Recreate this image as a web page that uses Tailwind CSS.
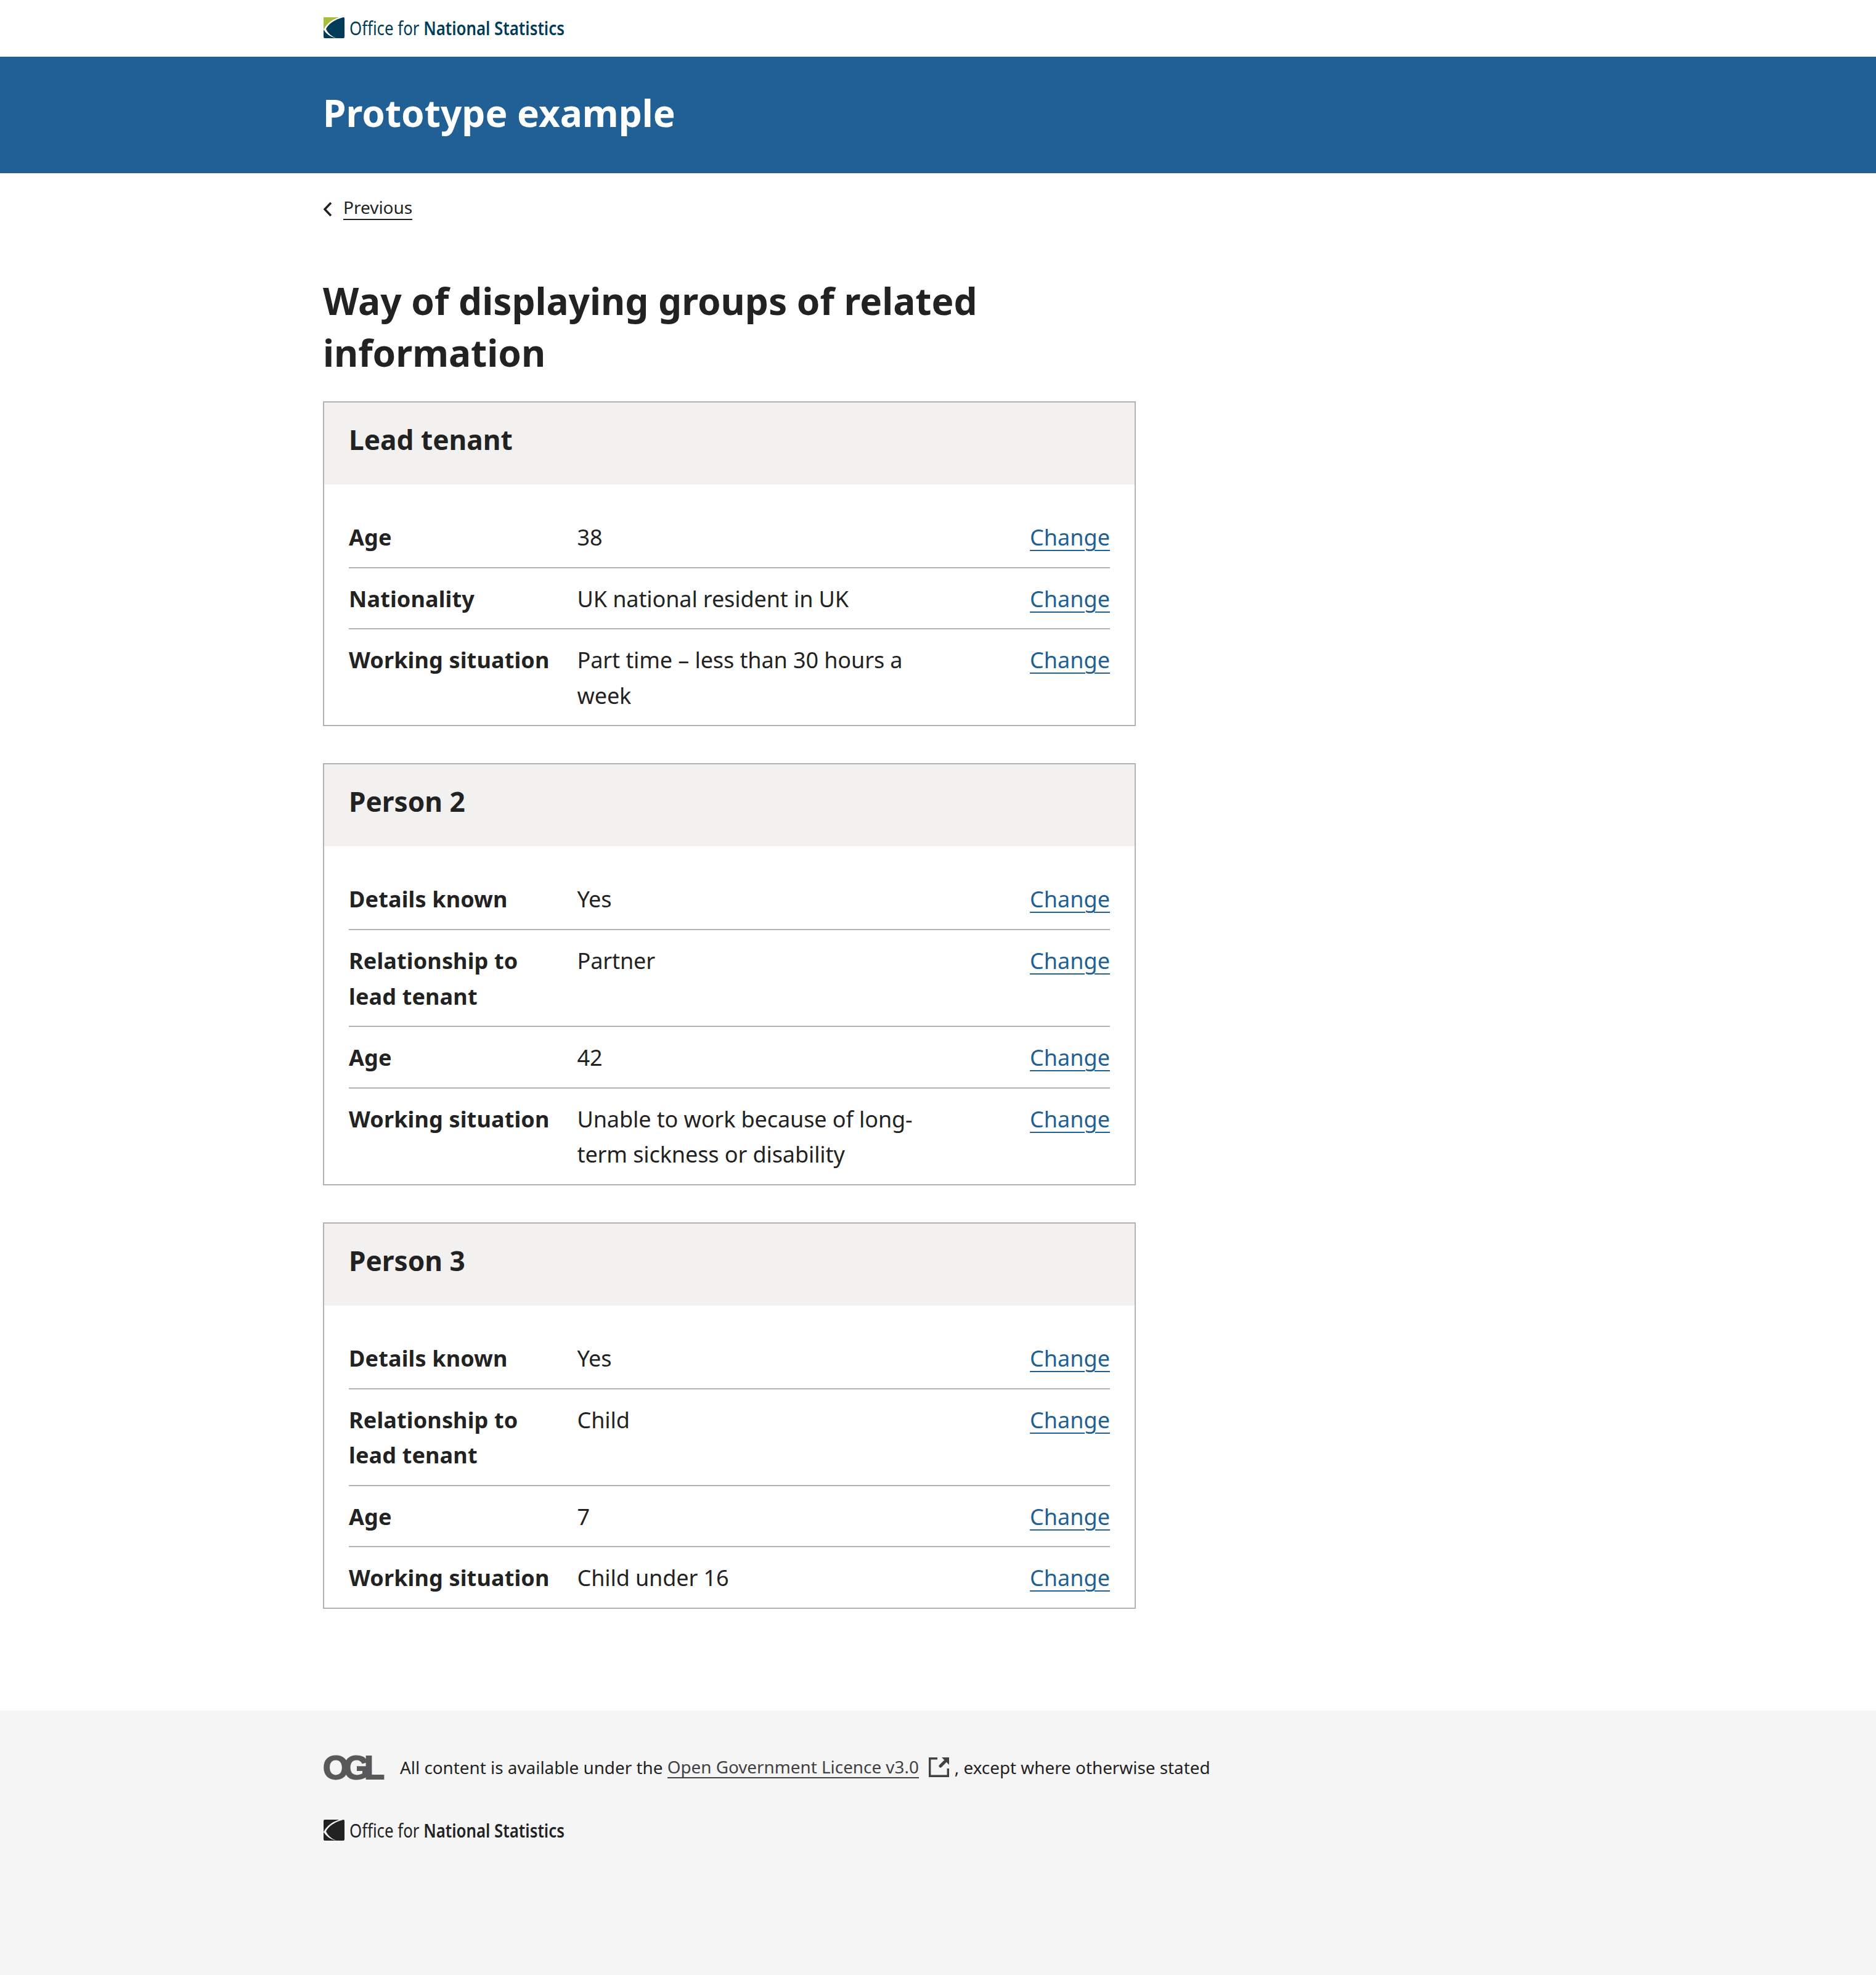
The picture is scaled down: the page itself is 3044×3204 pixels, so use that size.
<!DOCTYPE html>
<html lang="en">
<head>
    <meta charset="UTF-8">
    <meta name="viewport" content="width=device-width, initial-scale=1.0">
    <title>Prototype example</title>
    <script src="https://cdn.jsdelivr.net/npm/@tailwindcss/browser@4"></script>
</head>
<body class="bg-white font-['Noto_Sans',sans-serif] text-[#222222] text-[36px] leading-[57.6px]">
    <!-- Masthead -->
    <header class="h-[92px] flex items-center pl-[524px]">
        <svg class="w-[36px] h-[36px] shrink-0 -mt-[2px]" viewBox="0 0 36 36">
            <rect x="1" y="1" width="34" height="34" rx="2" fill="#003c57"/>
            <path d="M1 1H30C16 4 6 12 1 21Z" fill="#a8bd3a"/>
            <path d="M31 0C16 3 6 11 1 21C5 27 11 33 22 35C14 32 8 27 5 20C9 12 18 5 33 1Z" fill="#fff"/>
        </svg>
        <span class="ml-[7px] -mt-[2px] text-[31px] leading-[40px] text-[#003c57] inline-block origin-left scale-x-[0.833] whitespace-nowrap">Office for <span class="font-semibold">National Statistics</span></span>
    </header>

    <!-- Title banner -->
    <div class="bg-[#206095] h-[189px] flex items-center pl-[524px]">
        <div class="text-white font-bold text-[60.3px] leading-[84px] -mt-[8px]">Prototype example</div>
    </div>

    <main class="pl-[524px] w-[1843px] box-content">
        <a class="flex items-center pt-[36px] text-[28px] leading-[44px]">
            <svg class="w-[16px] h-[24px] mr-[17px] mt-[3px]" viewBox="0 0 16 24" fill="none" stroke="#222222" stroke-width="3.500"><path d="M13 2L3 12.500L13 23"/></svg>
            <span class="border-b-2 border-[#222222] leading-[38px]">Previous</span>
        </a>

        <h1 class="font-bold text-[60.3px] leading-[84px] mt-[89px] w-[1200px]">Way of displaying groups of related information</h1>

        <!-- Lead tenant -->
        <section class="mt-[37px] border-2 border-[#b1b4b6] w-[1319px]">
            <h2 class="bg-[#f2f1f0] h-[133px] pl-[40px] pt-[31px] font-bold text-[44.2px] leading-[58px]">Lead tenant</h2>
            <div class="pt-[36px] px-[40px]">
                <div class="flex pt-[21px] pb-[19px] border-b-2 border-[#b1b4b6]">
                    <div class="w-[370.500px] pr-[31px] font-bold tracking-[0.15px]">Age</div>
                    <div class="w-[600px]">38</div>
                    <a class="ml-auto h-fit text-[#206095] underline underline-offset-[7px] decoration-2">Change</a>
                </div>
                <div class="flex pt-[21px] pb-[19px] border-b-2 border-[#b1b4b6]">
                    <div class="w-[370.500px] pr-[31px] font-bold tracking-[0.15px]">Nationality</div>
                    <div class="w-[600px] tracking-[-0.1px]">UK national resident in UK</div>
                    <a class="ml-auto h-fit text-[#206095] underline underline-offset-[7px] decoration-2">Change</a>
                </div>
                <div class="flex pt-[21px] pb-[19px]">
                    <div class="w-[370.500px] pr-[31px] font-bold tracking-[0.15px]">Working situation</div>
                    <div class="w-[600px] tracking-[-0.1px]">Part time – less than 30 hours a week</div>
                    <a class="ml-auto h-fit text-[#206095] underline underline-offset-[7px] decoration-2">Change</a>
                </div>
            </div>
        </section>

        <!-- Person 2 -->
        <section class="mt-[60px] border-2 border-[#b1b4b6] w-[1319px]">
            <h2 class="bg-[#f2f1f0] h-[133px] pl-[40px] pt-[31px] font-bold text-[44.2px] leading-[58px]">Person 2</h2>
            <div class="pt-[36px] px-[40px]">
                <div class="flex pt-[21px] pb-[19px] border-b-2 border-[#b1b4b6]">
                    <div class="w-[370.500px] pr-[31px] font-bold tracking-[0.15px]">Details known</div>
                    <div class="w-[600px] tracking-[-0.1px]">Yes</div>
                    <a class="ml-auto h-fit text-[#206095] underline underline-offset-[7px] decoration-2">Change</a>
                </div>
                <div class="flex pt-[21px] pb-[19px] border-b-2 border-[#b1b4b6]">
                    <div class="w-[370.500px] pr-[31px] font-bold tracking-[0.15px]">Relationship to lead tenant</div>
                    <div class="w-[600px] tracking-[-0.1px]">Partner</div>
                    <a class="ml-auto h-fit text-[#206095] underline underline-offset-[7px] decoration-2">Change</a>
                </div>
                <div class="flex pt-[21px] pb-[19px] border-b-2 border-[#b1b4b6]">
                    <div class="w-[370.500px] pr-[31px] font-bold tracking-[0.15px]">Age</div>
                    <div class="w-[600px]">42</div>
                    <a class="ml-auto h-fit text-[#206095] underline underline-offset-[7px] decoration-2">Change</a>
                </div>
                <div class="flex pt-[21px] pb-[19px]">
                    <div class="w-[370.500px] pr-[31px] font-bold tracking-[0.15px]">Working situation</div>
                    <div class="w-[600px] tracking-[-0.1px]">Unable to work because of long-term sickness or disability</div>
                    <a class="ml-auto h-fit text-[#206095] underline underline-offset-[7px] decoration-2">Change</a>
                </div>
            </div>
        </section>

        <!-- Person 3 -->
        <section class="mt-[60px] border-2 border-[#b1b4b6] w-[1319px]">
            <h2 class="bg-[#f2f1f0] h-[133px] pl-[40px] pt-[31px] font-bold text-[44.2px] leading-[58px]">Person 3</h2>
            <div class="pt-[36px] px-[40px]">
                <div class="flex pt-[21px] pb-[19px] border-b-2 border-[#b1b4b6]">
                    <div class="w-[370.500px] pr-[31px] font-bold tracking-[0.15px]">Details known</div>
                    <div class="w-[600px] tracking-[-0.1px]">Yes</div>
                    <a class="ml-auto h-fit text-[#206095] underline underline-offset-[7px] decoration-2">Change</a>
                </div>
                <div class="flex pt-[21px] pb-[19px] border-b-2 border-[#b1b4b6]">
                    <div class="w-[370.500px] pr-[31px] font-bold tracking-[0.15px]">Relationship to lead tenant</div>
                    <div class="w-[600px] tracking-[-0.1px]">Child</div>
                    <a class="ml-auto h-fit text-[#206095] underline underline-offset-[7px] decoration-2">Change</a>
                </div>
                <div class="flex pt-[21px] pb-[19px] border-b-2 border-[#b1b4b6]">
                    <div class="w-[370.500px] pr-[31px] font-bold tracking-[0.15px]">Age</div>
                    <div class="w-[600px]">7</div>
                    <a class="ml-auto h-fit text-[#206095] underline underline-offset-[7px] decoration-2">Change</a>
                </div>
                <div class="flex pt-[21px] pb-[19px]">
                    <div class="w-[370.500px] pr-[31px] font-bold tracking-[0.15px]">Working situation</div>
                    <div class="w-[600px] tracking-[-0.1px]">Child under 16</div>
                    <a class="ml-auto h-fit text-[#206095] underline underline-offset-[7px] decoration-2">Change</a>
                </div>
            </div>
        </section>
    </main>

    <!-- Footer -->
    <footer class="mt-[165px] bg-[#f5f5f6] h-[430px] pl-[524px] pt-[67px]">
        <div class="flex items-center h-[50px] text-[27.85px] leading-[44px] whitespace-nowrap">
            <span class="w-[125px] font-['Liberation_Sans',sans-serif] font-bold text-[54px] leading-[50px] tracking-[-8.5px] text-[#58595b] [-webkit-text-stroke:2px_#58595b]">OGL</span>
            <span>All content is available under the&nbsp;</span>
            <a class="text-[#414042] border-b-2 border-[#414042] leading-[34px]">Open Government Licence v3.0</a>
            <svg class="w-[33px] h-[32px] ml-[16px] mr-[9px]" viewBox="0 0 33 32" fill="none">
                <path d="M14 1.700H1.700V30.300H31.300V18" stroke="#414042" stroke-width="3.400"/>
                <path d="M21 0H33V12Z" fill="#414042"/>
                <path d="M26 7L19 14" stroke="#414042" stroke-width="5" stroke-linecap="round"/>
            </svg>
            <span>, except where otherwise stated</span>
        </div>
        <div class="flex items-center mt-[57px] h-[40px]">
            <svg class="w-[36px] h-[36px] shrink-0" viewBox="0 0 36 36">
                <rect x="1" y="1" width="34" height="34" rx="2" fill="#222222"/>
                <path d="M31 0C16 3 6 11 1 21C5 27 11 33 22 35C14 32 8 27 5 20C9 12 18 5 33 1Z" fill="#f5f5f6"/>
            </svg>
            <span class="ml-[7px] text-[31px] leading-[40px] inline-block origin-left scale-x-[0.833] whitespace-nowrap">Office for <span class="font-semibold">National Statistics</span></span>
        </div>
    </footer>
</body>
</html>
